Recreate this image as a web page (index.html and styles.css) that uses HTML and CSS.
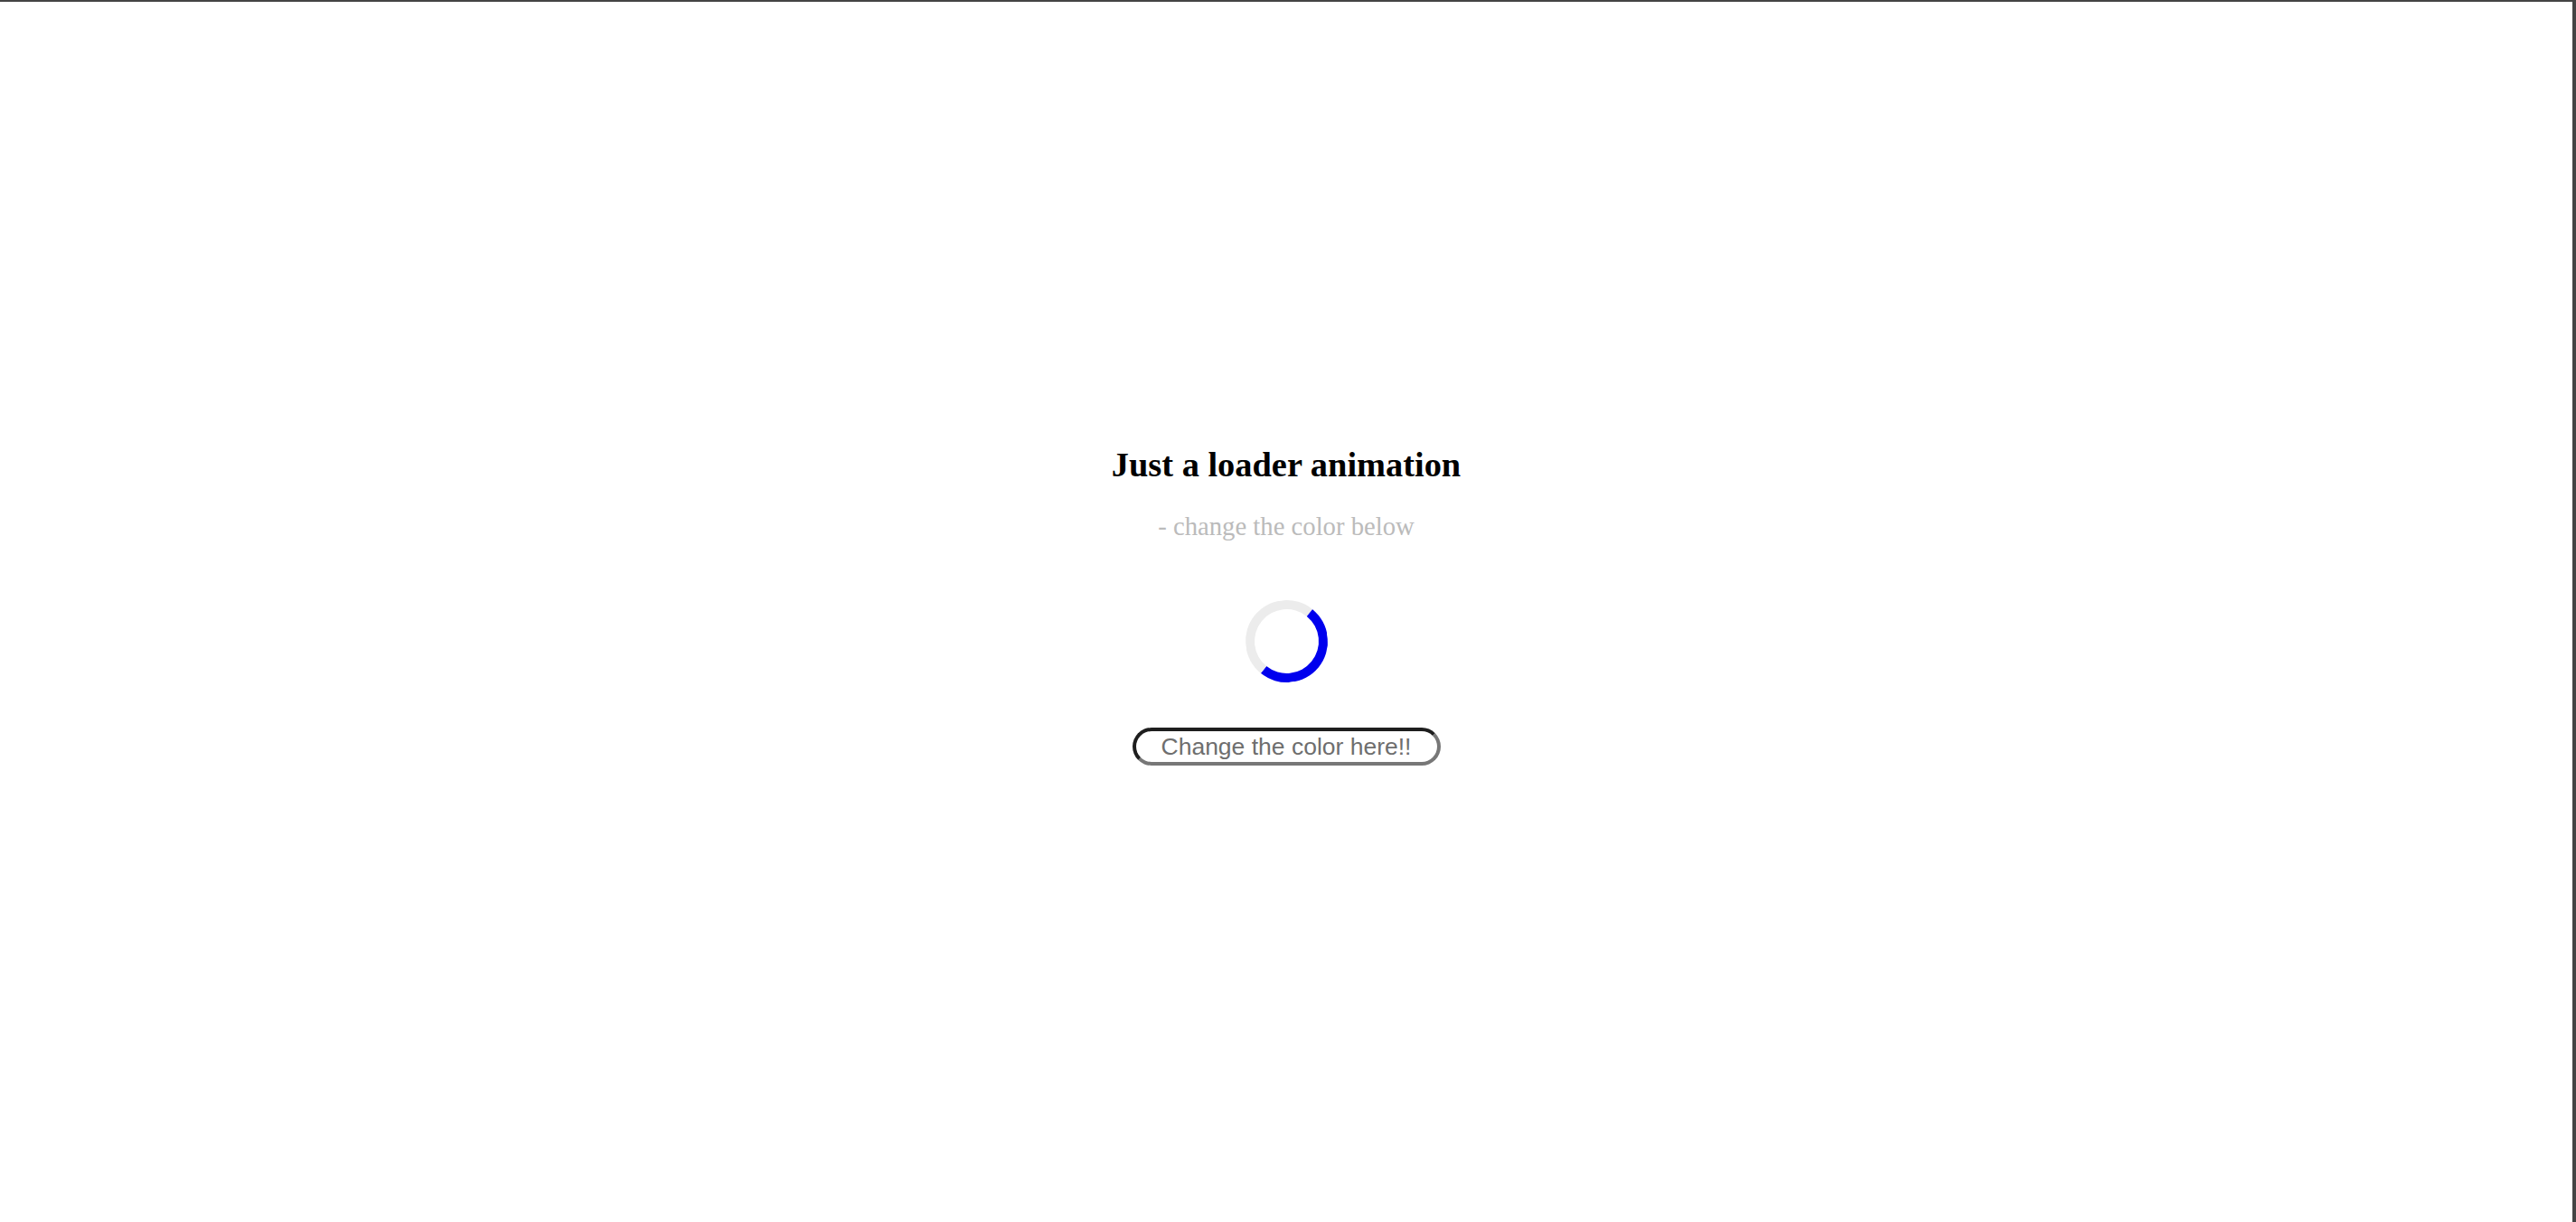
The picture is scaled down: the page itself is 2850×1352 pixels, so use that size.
FILE: index.html
```html
<!DOCTYPE html>
<html>
<head>
<meta charset="utf-8">
<link rel="stylesheet" href="styles.css">
</head>
<body>
<div class="frame">
  <main class="stage">
    <h1 class="title">Just a loader animation</h1>
    <p class="subtitle">- change the color below</p>
    <div class="loader"></div>
    <button class="color-btn" type="button">Change the color here!!</button>
  </main>
</div>
</body>
</html>
```
FILE: styles.css
```css
html, body {
  margin: 0;
  padding: 0;
  background: #fff;
}
.frame {
  box-sizing: border-box;
  height: 1352px;
  border-top: 2px solid #444;
  border-right: 4px solid #444;
}
.stage {
  display: flex;
  flex-direction: column;
  align-items: center;
  padding-top: 488px;
}
.title {
  margin: 0;
  font-family: "Liberation Serif", serif;
  font-weight: bold;
  font-size: 38.4px;
  line-height: 48px;
  color: #000;
}
.subtitle {
  margin: 28px 0 0;
  font-family: "Liberation Serif", serif;
  font-size: 28.7px;
  line-height: 32px;
  color: #bbb;
}
.loader {
  box-sizing: border-box;
  width: 91px;
  height: 91px;
  margin-top: 66px;
  border-radius: 50%;
  border: 10px solid #ececec;
  border-right-color: #0000ee;
  border-bottom-color: #0000ee;
  transform: rotate(-6deg);
}
.color-btn {
  box-sizing: border-box;
  margin-top: 50px;
  width: 341px;
  height: 42px;
  padding: 0;
  background: #fff;
  border: 4px solid;
  border-color: #1e1e1e #777 #777 #1e1e1e;
  border-radius: 21px;
  font-family: "Liberation Sans", Arial, sans-serif;
  font-size: 26.5px;
  color: #6e6e6e;
}
```
